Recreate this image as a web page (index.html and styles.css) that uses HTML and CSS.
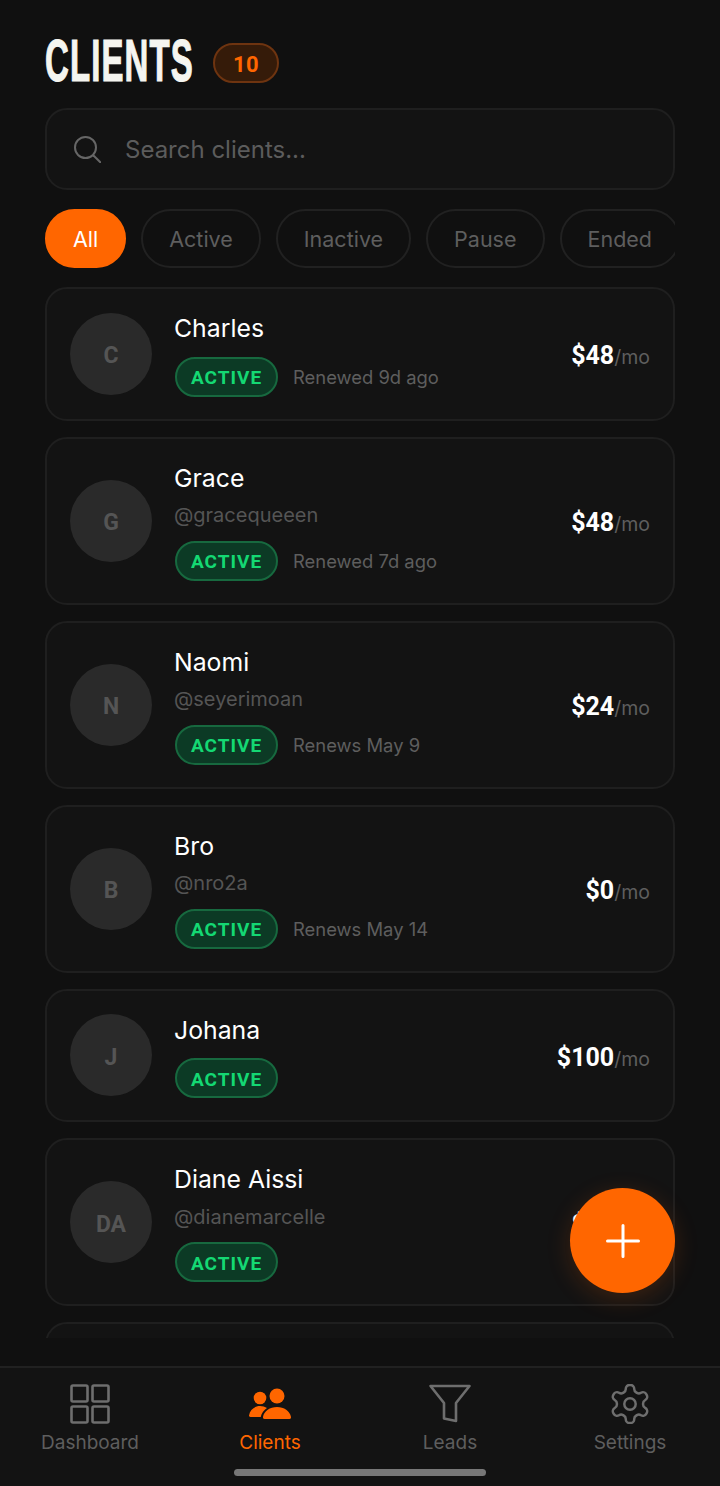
FILE: index.html
```html
<!DOCTYPE html>
<html lang="en">
<head>
  <meta charset="UTF-8">
  <title>Clients</title>
  <link rel="stylesheet" href="styles.css">
</head>
<body>
  <div class="app">
    <main class="content">
      <header class="top">
        <div class="title-box"><h1 class="title">CLIENTS</h1></div>
        <span class="count">10</span>
      </header>

      <div class="search">
        <svg class="search-icon" viewBox="0 0 28 28" fill="none" stroke="currentColor" stroke-width="2" stroke-linecap="round">
          <circle cx="12.5" cy="12.5" r="10.5"/>
          <path d="M20.5 20.5l7 7"/>
        </svg>
        <span class="search-text">Search clients...</span>
      </div>

      <div class="chips">
        <span class="chip chip-on">All</span>
        <span class="chip">Active</span>
        <span class="chip">Inactive</span>
        <span class="chip">Pause</span>
        <span class="chip">Ended</span>
      </div>

      <section class="list">
        <article class="card">
          <div class="avatar">C</div>
          <div class="info">
            <div class="name">Charles</div>
            <div class="status"><span class="badge">ACTIVE</span><span class="renew">Renewed 9d ago</span></div>
          </div>
          <div class="price"><b>$48</b>/mo</div>
        </article>
        <article class="card">
          <div class="avatar">G</div>
          <div class="info">
            <div class="name">Grace</div>
            <div class="handle">@gracequeeen</div>
            <div class="status"><span class="badge">ACTIVE</span><span class="renew">Renewed 7d ago</span></div>
          </div>
          <div class="price"><b>$48</b>/mo</div>
        </article>
        <article class="card">
          <div class="avatar">N</div>
          <div class="info">
            <div class="name">Naomi</div>
            <div class="handle">@seyerimoan</div>
            <div class="status"><span class="badge">ACTIVE</span><span class="renew">Renews May 9</span></div>
          </div>
          <div class="price"><b>$24</b>/mo</div>
        </article>
        <article class="card">
          <div class="avatar">B</div>
          <div class="info">
            <div class="name">Bro</div>
            <div class="handle">@nro2a</div>
            <div class="status"><span class="badge">ACTIVE</span><span class="renew">Renews May 14</span></div>
          </div>
          <div class="price"><b>$0</b>/mo</div>
        </article>
        <article class="card">
          <div class="avatar">J</div>
          <div class="info">
            <div class="name">Johana</div>
            <div class="status"><span class="badge">ACTIVE</span></div>
          </div>
          <div class="price"><b>$100</b>/mo</div>
        </article>
        <article class="card">
          <div class="avatar">DA</div>
          <div class="info">
            <div class="name">Diane Aissi</div>
            <div class="handle">@dianemarcelle</div>
            <div class="status"><span class="badge">ACTIVE</span></div>
          </div>
          <div class="price"><b>$48</b>/mo</div>
        </article>
        <article class="card"></article>
      </section>
    </main>

    <button class="fab" aria-label="Add client">
      <svg viewBox="0 0 34 34" fill="none" stroke="currentColor" stroke-width="3" stroke-linecap="round">
        <path d="M17 1.5v31M1.5 17h31"/>
      </svg>
    </button>

    <nav class="tabs">
      <a class="tab">
        <svg class="tab-icon" viewBox="0 0 40 40" fill="none" stroke="currentColor" stroke-width="2.6" stroke-linejoin="round">
          <rect x="1.5" y="1.5" width="16" height="16" rx="1.5"/>
          <rect x="22.5" y="1.5" width="16" height="16" rx="1.5"/>
          <rect x="1.5" y="22.5" width="16" height="16" rx="1.5"/>
          <rect x="22.5" y="22.5" width="16" height="16" rx="1.5"/>
        </svg>
        <span>Dashboard</span>
      </a>
      <a class="tab tab-on">
        <svg class="tab-icon" viewBox="0 0 44 40" fill="currentColor">
          <circle cx="12" cy="14" r="6.3"/>
          <circle cx="29" cy="12" r="7.5"/>
          <path d="M1 31.500C2 26 6.500 22 12 22c2.500 0 5 .7 7 2-3 2-5.500 5-6.300 9H2.500C1.500 33 .8 32.400 1 31.500z"/>
          <path d="M15 33c1-6 7-10 14-10s13 4 14 10c.2 1.100-.5 2-1.500 2h-25c-1 0-1.700-.9-1.500-2z"/>
        </svg>
        <span>Clients</span>
      </a>
      <a class="tab">
        <svg class="tab-icon" viewBox="0 0 42 40" fill="none" stroke="currentColor" stroke-width="2.6" stroke-linejoin="round">
          <path d="M1.500 2h39L27 19V37L15 34.500V19z"/>
        </svg>
        <span>Leads</span>
      </a>
      <a class="tab">
        <svg class="tab-icon" viewBox="1.500 1.500 21 21" fill="none" stroke="currentColor" stroke-width="1.300" stroke-linejoin="round">
          <path d="M12.220 2h-.44a2 2 0 0 0-2 2v.18a2 2 0 0 1-1 1.730l-.43.25a2 2 0 0 1-2 0l-.15-.08a2 2 0 0 0-2.730.73l-.22.38a2 2 0 0 0 .73 2.730l.15.1a2 2 0 0 1 1 1.720v.51a2 2 0 0 1-1 1.740l-.15.09a2 2 0 0 0-.73 2.730l.22.38a2 2 0 0 0 2.730.73l.15-.08a2 2 0 0 1 2 0l.43.25a2 2 0 0 1 1 1.730V20a2 2 0 0 0 2 2h.44a2 2 0 0 0 2-2v-.18a2 2 0 0 1 1-1.730l.43-.25a2 2 0 0 1 2 0l.15.08a2 2 0 0 0 2.730-.73l.22-.39a2 2 0 0 0-.73-2.730l-.15-.08a2 2 0 0 1-1-1.740v-.5a2 2 0 0 1 1-1.740l.15-.09a2 2 0 0 0 .73-2.730l-.22-.38a2 2 0 0 0-2.730-.73l-.15.08a2 2 0 0 1-2 0l-.43-.25a2 2 0 0 1-1-1.730V4a2 2 0 0 0-2-2z"/>
          <circle cx="12" cy="12" r="3"/>
        </svg>
        <span>Settings</span>
      </a>
      <div class="home-bar"></div>
    </nav>
  </div>
</body>
</html>
```

FILE: styles.css
```css
* {
  box-sizing: border-box;
}

body {
  margin: 0;
  background-color: #101010;
  font-family: "Inter", "Open Sans", sans-serif;
  color: #fff;
}

.app {
  position: relative;
  width: 720px;
  height: 1486px;
  display: flex;
  flex-direction: column;
  overflow: hidden;
}

.content {
  height: 1338px;
  padding: 0 45px;
  overflow: hidden;
}

.top {
  height: 108px;
  display: flex;
  align-items: center;
  gap: 20px;
  padding-top: 18px;
}

/* no condensed display font here, so squeeze the bold sans */
.title-box {
  width: 148px;
  height: 60px;
}

.title {
  margin: -2px 0 0;
  font-family: "Liberation Sans", sans-serif;
  font-size: 60px;
  font-weight: 700;
  line-height: 60px;
  letter-spacing: 2px;
  color: #f5f5f0;
  white-space: nowrap;
  -webkit-text-stroke: 1.2px #f5f5f0;
  transform: scaleX(.55);
  transform-origin: left center;
}

.count {
  width: 66px;
  height: 40px;
  padding-top: 2px;
  border-radius: 20px;
  border: 2px solid #6e3410;
  background-color: #351b09;
  color: #ff6600;
  font-family: "Roboto", sans-serif;
  font-size: 22px;
  font-weight: 700;
  display: flex;
  align-items: center;
  justify-content: center;
  letter-spacing: .5px;
}

.search {
  height: 82px;
  display: flex;
  align-items: center;
  gap: 24px;
  padding: 0 26px;
  border: 2px solid #1f1f1f;
  border-radius: 22px;
  background-color: #131313;
}

.search-icon {
  width: 28px;
  height: 28px;
  color: #666;
  flex: none;
}

.search-text {
  font-size: 24px;
  color: #5c5c5c;
}

.chips {
  display: flex;
  gap: 15px;
  margin-top: 19px;
  overflow: hidden;
}

.chip {
  flex: none;
  height: 59px;
  padding: 0 26px;
  border: 2px solid #212121;
  border-radius: 30px;
  display: flex;
  align-items: center;
  font-size: 21.500px;
  color: #5e5e5e;
}

.chip-on {
  background-color: #ff6600;
  border-color: #ff6600;
  color: #fff;
}

.list {
  margin-top: 19px;
  display: flex;
  flex-direction: column;
  gap: 16px;
}

.card {
  flex: none;
  min-height: 133.500px;
  display: flex;
  align-items: center;
  gap: 23px;
  padding: 22px 23px;
  border: 2px solid #1f1f1f;
  border-radius: 22px;
  background-color: #131313;
}

.avatar {
  width: 82px;
  height: 82px;
  padding-top: 4px;
  flex: none;
  border-radius: 50%;
  background-color: #2a2a2a;
  color: #555;
  font-family: "Roboto", sans-serif;
  font-size: 23px;
  font-weight: 700;
  display: flex;
  align-items: center;
  justify-content: center;
}

.info {
  flex: 1;
  min-width: 0;
  display: flex;
  flex-direction: column;
  gap: 12px;
}

.name {
  margin: 1px 0 -1px -1px;
  font-size: 24.800px;
  line-height: 33.500px;
  color: #fff;
}

.handle {
  margin: -2px 0 2px -1px;
  font-size: 20px;
  line-height: 22.500px;
  color: #555;
}

.status {
  display: flex;
  align-items: center;
  gap: 15px;
}

.badge {
  width: 103px;
  height: 40px;
  padding-top: 2px;
  border-radius: 20px;
  border: 2px solid #17693f;
  background-color: #0c3a25;
  color: #14d873;
  font-family: "Roboto", sans-serif;
  font-size: 19px;
  font-weight: 700;
  letter-spacing: 1px;
  display: flex;
  align-items: center;
  justify-content: center;
}

.renew {
  font-size: 18.400px;
  color: #5e5e5e;
}

.price {
  flex: none;
  padding-top: 4px;
  font-size: 19.500px;
  color: #5e5e5e;
}

.price b {
  font-family: "Roboto", sans-serif;
  font-size: 25px;
  font-weight: 700;
  color: #fff;
}

.fab {
  position: absolute;
  left: 570px;
  top: 1188px;
  width: 105px;
  height: 105px;
  padding: 0;
  border: none;
  border-radius: 50%;
  background-color: #ff6600;
  color: #fff;
  box-shadow: 0 6px 24px rgba(255, 102, 0, .18);
  display: flex;
  align-items: center;
  justify-content: center;
}

.fab svg {
  width: 34px;
  height: 34px;
}

.tabs {
  position: relative;
  margin-top: 28px;
  height: 120px;
  border-top: 2px solid #212121;
  background-color: #131313;
  display: grid;
  grid-template-columns: repeat(4, 1fr);
}

.tab {
  display: flex;
  flex-direction: column;
  align-items: center;
  padding-top: 16px;
  gap: 6px;
  font-size: 19px;
  line-height: 26px;
  color: #5e5e5e;
}

.tab-on {
  color: #ff6600;
}

.tab-icon {
  height: 40px;
  width: 44px;
  color: #6e6e6e;
}

.tab-on .tab-icon {
  color: #ff6600;
}

.home-bar {
  position: absolute;
  left: 234px;
  bottom: 10px;
  width: 252px;
  height: 7px;
  border-radius: 4px;
  background-color: #777;
}
```
